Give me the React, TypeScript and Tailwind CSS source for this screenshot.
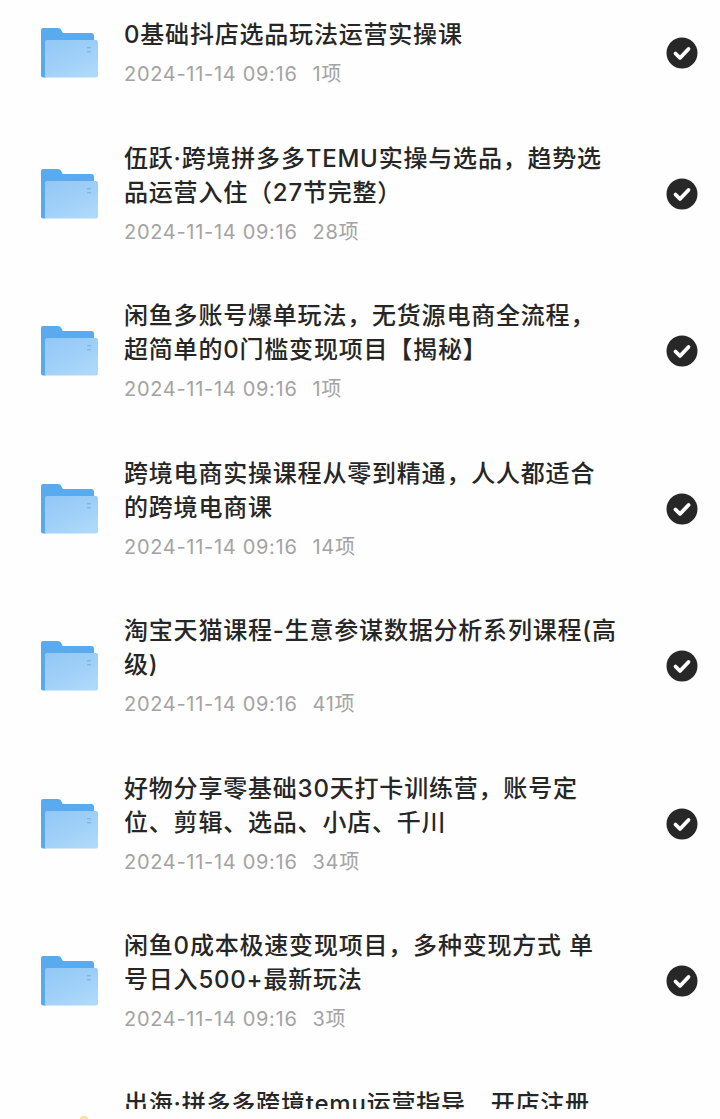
const font = "font-['Inter','Noto_Sans_CJK_SC',sans-serif]";

const rows = [
  { lines: ["0基础抖店选品玩法运营实操课"], count: "1项" },
  { lines: ["伍跃·跨境拼多多TEMU实操与选品，趋势选", "品运营入住（27节完整）"], count: "28项" },
  { lines: ["闲鱼多账号爆单玩法，无货源电商全流程，", "超简单的0门槛变现项目【揭秘】"], count: "1项" },
  { lines: ["跨境电商实操课程从零到精通，人人都适合", "的跨境电商课"], count: "14项" },
  { lines: ["淘宝天猫课程-生意参谋数据分析系列课程(高", "级)"], count: "41项" },
  { lines: ["好物分享零基础30天打卡训练营，账号定", "位、剪辑、选品、小店、千川"], count: "34项" },
  { lines: ["闲鱼0成本极速变现项目，多种变现方式 单", "号日入500+最新玩法"], count: "3项" },
];

function Folder({ id }: { id: string }) {
  return (
    <svg width="57" height="50" viewBox="0 0 57 50" className="shrink-0">
      <defs>
        <linearGradient id={id} x1="0.1" y1="0" x2="0.75" y2="1">
          <stop offset="0" stopColor="#93c8f6" />
          <stop offset="0.55" stopColor="#a0d0f8" />
          <stop offset="1" stopColor="#aed9fa" />
        </linearGradient>
      </defs>
      <path
        d="M2 0H17C18.500 0 19.500 .8 20.200 2L21.800 5H50.500C52 5 53 6 53 7.500V20H0V2C0 .9 .9 0 2 0Z"
        fill="#5aaaf0"
      />
      <path d="M0 10H5V49.500H2C.9 49.500 0 48.600 0 47.500Z" fill="#5aa8ee" />
      <path
        d="M4 14C4 12.900 4.900 12 6 12H55C56.100 12 57 12.900 57 14V47.500C57 48.600 56.100 49.500 55 49.500H4Z"
        fill={`url(#${id})`}
      />
      <rect x="46" y="19" width="4" height="1.400" fill="#7fb6e6" />
      <rect x="46" y="23" width="4" height="1.400" fill="#7fb6e6" />
    </svg>
  );
}

function Check() {
  return (
    <svg width="32" height="32" viewBox="0 0 32 32" className="shrink-0">
      <circle cx="16" cy="16" r="15.500" fill="#272727" />
      <path d="M9.500 16.500L14 21L22.500 12" fill="none" stroke="#ffffff" strokeWidth="3.800" strokeLinecap="round" strokeLinejoin="round" />
    </svg>
  );
}

function Row({ lines, count, i }: { lines: string[]; count: string; i: number }) {
  return (
    <div className="flex items-center pl-[41px] pr-[22px]">
      <div className="-mt-[1px] flex">
        <Folder id={`folder-${i}`} />
      </div>
      <div className="ml-[26px] flex-1 min-w-0">
        <div className="text-[24px] leading-[34px] font-medium tracking-[0.8px] text-[#262626] whitespace-nowrap">
          {lines.map((l) => (
            <div key={l}>{l}</div>
          ))}
        </div>
        <div className="mt-[7px] flex text-[20px] leading-[30px] tracking-[0.7px] text-[#a3a3a3] whitespace-nowrap">
          <span>2024-11-14 09:16</span>
          <span className="ml-[15px]">{count}</span>
        </div>
      </div>
      <div className="-mt-[1px] flex">
        <Check />
      </div>
    </div>
  );
}

export default function App() {
  return (
    <div className={`${font} relative h-[1119px] w-[720px] overflow-hidden bg-[#fefefe] pt-[18px]`}>
      <div className="flex flex-col gap-[52.5px]">
        {rows.map((r, i) => (
          <Row key={i} i={i} lines={r.lines} count={r.count} />
        ))}
        <div className="pl-[124px]">
          <div className="h-[22px] overflow-hidden text-[24px] leading-[34px] font-medium tracking-[0.8px] text-[#262626] whitespace-nowrap">
            出海·拼多多跨境temu运营指导<span className="text-transparent">，</span>开店注册
          </div>
        </div>
      </div>
      <div className="absolute left-[80px] top-[1116px] h-[3px] w-[8px] rounded-t-sm bg-[#f5e6a6]" />
    </div>
  );
}
